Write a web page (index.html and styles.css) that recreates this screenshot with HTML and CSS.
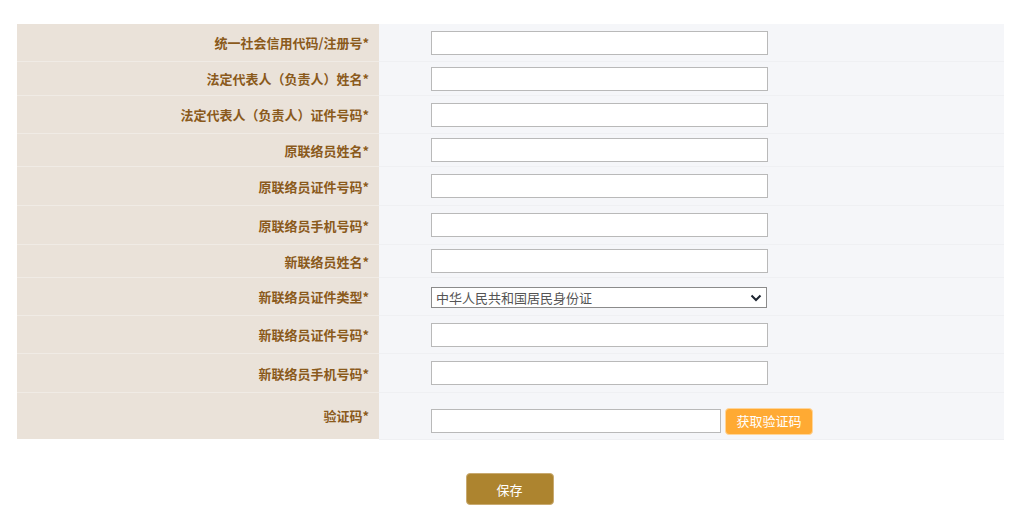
FILE: index.html
```html
<!DOCTYPE html>
<html lang="zh-CN">
<head>
<meta charset="utf-8">
<title>变更联络员</title>
<link rel="stylesheet" href="styles.css">
</head>
<body>
<div class="page">
  <div class="form">
    <div class="row h38"><div class="label">统一社会信用代码/注册号*</div><div class="field"><input class="text" type="text"></div></div>
    <div class="row h34"><div class="label">法定代表人（负责人）姓名*</div><div class="field"><input class="text" type="text"></div></div>
    <div class="row h38"><div class="label">法定代表人（负责人）证件号码*</div><div class="field"><input class="text" type="text"></div></div>
    <div class="row h33"><div class="label">原联络员姓名*</div><div class="field"><input class="text" type="text"></div></div>
    <div class="row h39"><div class="label">原联络员证件号码*</div><div class="field"><input class="text" type="text"></div></div>
    <div class="row h39"><div class="label">原联络员手机号码*</div><div class="field"><input class="text" type="text"></div></div>
    <div class="row h33"><div class="label">新联络员姓名*</div><div class="field"><input class="text" type="text"></div></div>
    <div class="row h38"><div class="label">新联络员证件类型*</div><div class="field">
      <div class="select"><span class="select-text">中华人民共和国居民身份证</span>
        <svg class="chev" width="12" height="8" viewBox="0 0 12 8"><path d="M1.5 1.5 L6 6 L10.5 1.5" fill="none" stroke="#1c2430" stroke-width="2"/></svg>
      </div>
    </div></div>
    <div class="row h38"><div class="label">新联络员证件号码*</div><div class="field"><input class="text" type="text"></div></div>
    <div class="row h39"><div class="label">新联络员手机号码*</div><div class="field"><input class="text" type="text"></div></div>
    <div class="row code"><div class="label">验证码*</div><div class="field"><input class="text short-input" type="text"><button class="get-code" type="button">获取验证码</button></div></div>
  </div>
  <div class="actions"><button class="save" type="button">保存</button></div>
</div>
</body>
</html>
```

FILE: styles.css
```css
* { box-sizing: border-box; }
html, body { margin: 0; padding: 0; background: #ffffff; }
body { font-family: "Microsoft YaHei", "Noto Sans CJK SC", "Noto Sans", sans-serif; font-size: 13px; }
.page { padding: 24px 20px 0 17px; }
.form { display: flex; flex-direction: column; }
.row { display: flex; border-bottom: 1px solid #f0ebe5; }
.row:last-child { border-bottom: none; }
.row.h33 { height: 33px; }
.row.h34 { height: 34px; }
.row.h38 { height: 38px; }
.row.h39 { height: 39px; }
.row.code { height: 46px; }
.label {
  width: 362px; flex: none; background: #eae2d9;
  display: flex; align-items: center; justify-content: flex-end;
  padding-right: 10px; color: #8a5a1c; font-weight: bold; font-size: 13px;
}
.field {
  flex: 1; background: #f5f6f9;
  display: flex; align-items: center; padding-left: 52px;
}
.row .field { box-shadow: 0 1px 0 #eff0f3; }
.text {
  width: 337px; height: 24px; border: 1px solid #b9b9b9; background: #fff;
  margin: 0; padding: 0 4px; font-size: 13px;
}
.row.code .field { padding-top: 10px; }
.row.code .label { padding-bottom: 2px; }
.text.short-input { width: 290px; }
.select {
  width: 336px; height: 21px; border: 1px solid #8b8b8b; background: #fff;
  display: flex; align-items: center; justify-content: space-between;
  padding: 0 4px; color: #555555; font-size: 13px; margin-top: 2px;
}
.select-text { line-height: 1; }
.chev { display: block; }
.get-code {
  margin-left: 4px; width: 88px; height: 27px; border: 1px solid #ffd59a;
  background: #ffaa33; color: #fff; border-radius: 4px; font-size: 13px;
  font-family: inherit; padding: 0 0 2px;
}
.actions { display: flex; justify-content: center; padding-top: 34px; padding-right: 2px; }
.save {
  width: 88px; height: 32px; border: 1px solid #c9aa70; background: #ad842f;
  color: #fff; border-radius: 4px; font-size: 13px; font-family: inherit; padding: 0;
}
```
